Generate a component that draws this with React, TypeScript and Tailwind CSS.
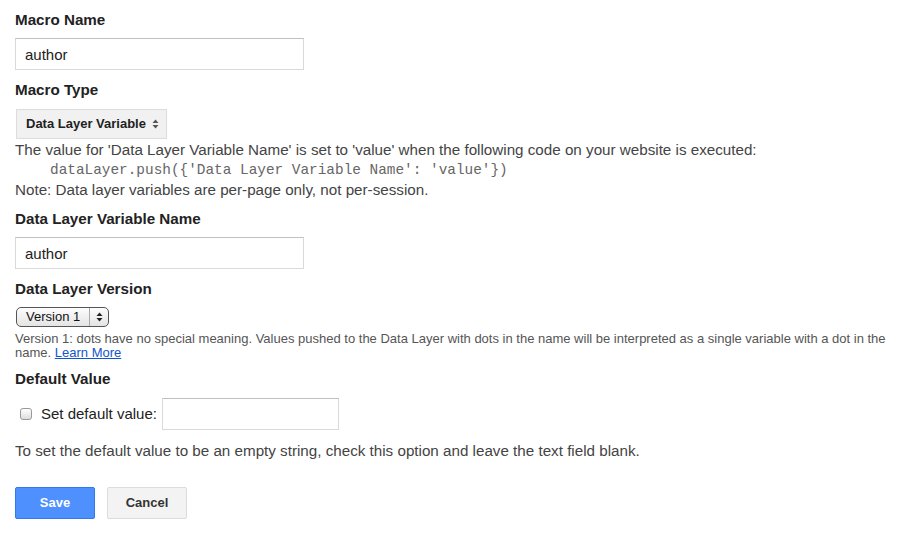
import { useState } from 'react';

function Label({ children, className = '' }: { children: React.ReactNode; className?: string }) {
  return <div className={`text-[15.2px] font-bold leading-[20px] text-[#222] ${className}`}>{children}</div>;
}

function TextBox({ value, className = '' }: { value: string; className?: string }) {
  return (
    <input
      defaultValue={value}
      className={`h-[32px] border border-[#d9d9d9] border-t-[#c0c0c0] bg-white px-[9px] text-[15px] text-[#222] outline-none ${className}`}
    />
  );
}

function UpDown({ className = '' }: { className?: string }) {
  return (
    <svg width="7" height="10" viewBox="0 0 7 10" className={className}>
      <path d="M3.5 0.5 L6.5 4 L0.5 4 Z" fill="currentColor" />
      <path d="M3.5 9.5 L6.5 6 L0.5 6 Z" fill="currentColor" />
    </svg>
  );
}

export default function App() {
  const [checked, setChecked] = useState(false);
  return (
    <div
      className="min-h-[556px] w-[900px] bg-white pl-[15px] pr-[4px] pt-[10px] text-[#222]"
      style={{ fontFamily: '"Liberation Sans", Arial, sans-serif' }}
    >
      {/* macro name */}
      <Label>Macro Name</Label>
      <TextBox value="author" className="mt-[8px] w-[289px]" />

      {/* macro type */}
      <Label className="mt-[10px]">Macro Type</Label>
      <div className="mt-[9px] ml-[1px] flex h-[30px] w-[151px] items-center justify-between border border-[#dcdcdc] bg-[#f1f1f1] pl-[9px] pr-[7px]">
        <span className="text-[13px] font-bold text-[#222]">Data Layer Variable</span>
        <UpDown className="text-[#555]" />
      </div>
      <div className="mt-[1px] text-[15.2px] leading-[20px] text-[#444]">
        <div>The value for 'Data Layer Variable Name' is set to 'value' when the following code on your website is executed:</div>
        <div className="pl-[35px] text-[14.4px] text-[#666]" style={{ fontFamily: '"Liberation Mono", "Courier New", monospace' }}>
          dataLayer.push({'{'}'Data Layer Variable Name': 'value'{'}'})
        </div>
        <div>Note: Data layer variables are per-page only, not per-session.</div>
      </div>

      {/* variable name */}
      <Label className="mt-[9px]">Data Layer Variable Name</Label>
      <TextBox value="author" className="mt-[8px] w-[289px]" />

      {/* version */}
      <Label className="mt-[10px]">Data Layer Version</Label>
      <div className="mt-[8px] ml-[1px] flex h-[20px] w-[93px] items-stretch rounded-[5px] border border-[#555] bg-gradient-to-b from-[#fdfdfd] to-[#e4e4e4] text-[13px] text-[#111]">
        <span className="flex flex-1 items-center pl-[9px]">Version 1</span>
        <span className="flex w-[19px] items-center justify-center border-l border-[#aaa]">
          <UpDown className="text-[#222]" />
        </span>
      </div>
      <div className="mt-[5px] text-[13px] leading-[14px] text-[#555]">
        Version 1: dots have no special meaning. Values pushed to the Data Layer with dots in the name will be interpreted as a single variable with a dot in the name.{' '}
        <a href="#" className="text-[#15c] underline">Learn More</a>
      </div>

      {/* default value */}
      <Label className="mt-[9px]">Default Value</Label>
      <div className="mt-[9px] flex items-center">
        <button
          type="button"
          onClick={() => setChecked(!checked)}
          className="ml-[5px] h-[12px] w-[12px] rounded-[3px] border border-[#999] bg-gradient-to-b from-[#fff] to-[#ddd]"
        />
        <span className="ml-[9px] text-[15px] text-[#222]">Set default value:</span>
        <TextBox value="" className="ml-[5px] h-[31px] w-[177px]" />
      </div>
      <div className="mt-[11px] text-[15.2px] leading-[20px] text-[#444]">
        To set the default value to be an empty string, check this option and leave the text field blank.
      </div>

      {/* actions */}
      <div className="mt-[26px] flex gap-[12px]">
        <button className="h-[32px] w-[80px] rounded-[2px] border border-[#3079ed] bg-[#4d90fe] text-[13px] font-bold text-white">
          Save
        </button>
        <button className="h-[32px] w-[80px] rounded-[2px] border border-[#dcdcdc] bg-[#f3f3f3] text-[13px] font-bold text-[#333]">
          Cancel
        </button>
      </div>
    </div>
  );
}
